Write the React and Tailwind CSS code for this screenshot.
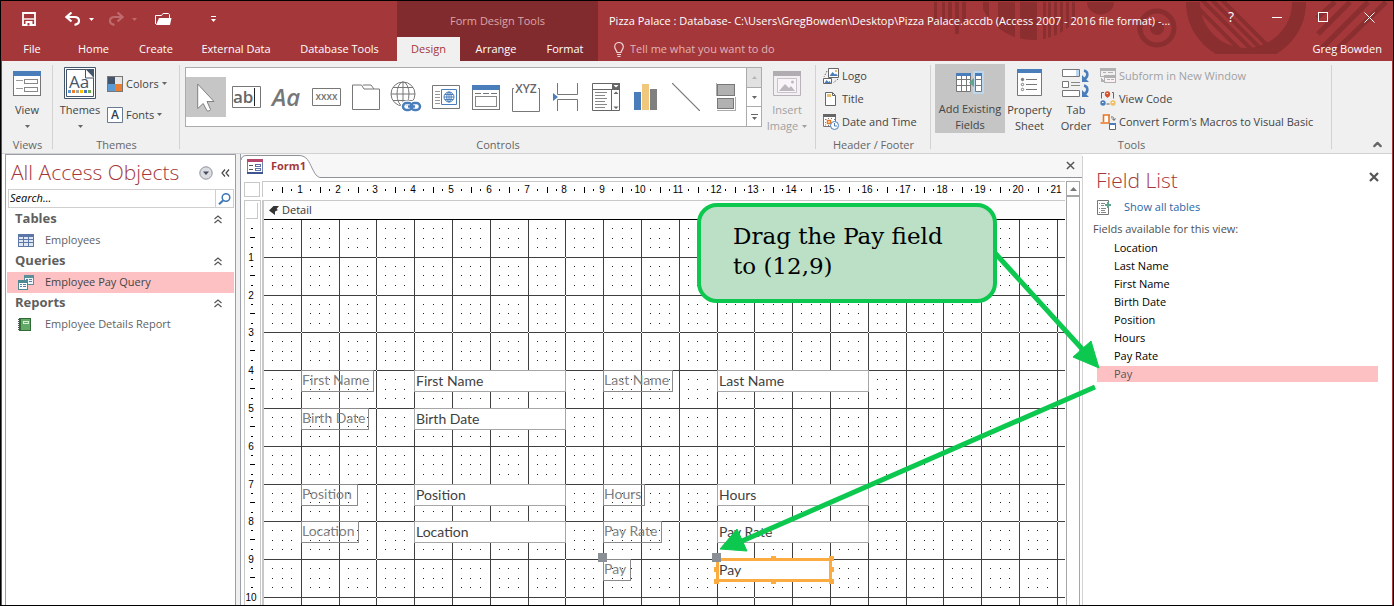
import React, { useState } from 'react';
import { ChevronUp } from 'lucide-react';

// one centimetre on the design surface
const CM = 37.79;
const START = 36.9;
const COLS = 21;
const ROWS = 10;

const linePos = (n) => Math.round(START + CM * n);

// grid lines that fall on a rounding edge show a white pixel where they cross
const hasGap = (n) => {
  const frac = (START + CM * n) % 1;
  return frac > 0.35 && frac < 0.5;
};

const tabs = [
  { name: 'File', width: 'w-[60px]' },
  { name: 'Home', width: 'w-[63px]' },
  { name: 'Create', width: 'w-[62px]' },
  { name: 'External Data', width: 'w-[98px]' },
  { name: 'Database Tools', width: 'w-[109px]' },
];

const contextTabs = [
  { name: 'Design', width: 'w-[63px]' },
  { name: 'Arrange', width: 'w-[72px]' },
  { name: 'Format', width: 'w-[66px]' },
];

const fieldNames = ['Location', 'Last Name', 'First Name', 'Birth Date', 'Position', 'Hours', 'Pay Rate', 'Pay'];

const formFields = [
  { id: 'first-name', name: 'First Name', label: 'left-[37px] top-[150px] w-[73px]', box: 'left-[150px] top-[150px] w-[152px]' },
  { id: 'birth-date', name: 'Birth Date', label: 'left-[37px] top-[188px] w-[68px]', box: 'left-[150px] top-[188px] w-[152px]' },
  { id: 'position', name: 'Position', label: 'left-[37px] top-[264px] w-[57px]', box: 'left-[150px] top-[264px] w-[152px]' },
  { id: 'location', name: 'Location', label: 'left-[37px] top-[301px] w-[58px]', box: 'left-[150px] top-[301px] w-[152px]' },
  { id: 'last-name', name: 'Last Name', label: 'left-[339px] top-[150px] w-[70px]', box: 'left-[453px] top-[150px] w-[152px]' },
  { id: 'hours', name: 'Hours', label: 'left-[339px] top-[264px] w-[42px]', box: 'left-[453px] top-[264px] w-[152px]' },
  { id: 'pay-rate', name: 'Pay Rate', label: 'left-[339px] top-[301px] w-[59px]', box: 'left-[453px] top-[301px] w-[152px]' },
  { id: 'pay', name: 'Pay', label: 'left-[339px] top-[339px] w-[28px]', box: 'left-[453px] top-[339px] w-[115px]' },
];

const Caret = ({ className }) => (
  <svg width="5" height="3" viewBox="0 0 5 3" className={className} aria-hidden="true">
    <path d="M0 0h5L2.5 3z" fill="currentColor" />
  </svg>
);

/* ---------- title bar icons ---------- */

const SaveIcon = () => (
  <svg width="14" height="14" viewBox="0 0 14 14" fill="none" stroke="#fff">
    <path d="M1 1h12v12H1z" strokeWidth="1.800" />
    <path d="M2 7h10" strokeWidth="1.400" />
    <path d="M3.500 9h7v5h-7z" fill="#fff" stroke="none" />
    <path d="M5.500 11h2v2.500h-2z" fill="#a4373a" stroke="none" />
  </svg>
);

const UndoIcon = ({ className }) => (
  <svg width="16" height="14" viewBox="0 0 16 14" fill="none" className={className}>
    <path d="M2 5h7.500c2.800 0 4.500 1.600 4.500 3.800S12.500 12.500 9.500 12.800" stroke="currentColor" strokeWidth="2.200" />
    <path d="M6.500 .5L1.500 5l5 4.500" stroke="currentColor" strokeWidth="2.200" />
  </svg>
);

const OpenIcon = () => (
  <svg width="17" height="14" viewBox="0 0 17 14" fill="none">
    <path d="M.5 12V3.500h6L8 1.500h5.500l1 1V6" stroke="#fff" />
    <path d="M4 6h12.500L15 13H1z" fill="#fff" />
  </svg>
);

const HeaderArt = () => (
  <svg className="absolute top-0 right-0" width="462" height="60" viewBox="930 1 462 60" fill="none" aria-hidden="true">
    <defs>
      <clipPath id="disc"><circle cx="1033" cy="-16" r="56" /></clipPath>
      <clipPath id="inner"><circle cx="1246" cy="2" r="47" /></clipPath>
      <clipPath id="flat"><path d="M1180 2h140v52h-140z" /></clipPath>
    </defs>
    <g fill="#8a2e30">
      <path d="M934 2h3v23h-3zM942 2h3v21h-3zM948 2h4v21h-4zM955 2h4v32h-4zM962 2h4v23h-4z" />
      <g clipPath="url(#disc)">
        <path d="M983 2h6v50h-6zM998 2h17v50h-17zM1020 2h17v50h-17zM1043 2h3v50h-3zM1048 2h3v50h-3zM1054 2h3v50h-3zM1060 2h3v50h-3zM1066 2h3v50h-3zM1072 2h3v50h-3z" />
      </g>
      <path d="M1087 2a13 12 0 0 0 27 0z" />
      <circle cx="1157" cy="28" r="7" />
    </g>
    <circle cx="1157" cy="28" r="17" stroke="#8a2e30" strokeWidth="5" />
    <g clipPath="url(#flat)">
      <circle cx="1246" cy="2" r="53" stroke="#8a2e30" strokeWidth="14" />
    </g>
    <g clipPath="url(#inner)" stroke="#8a2e30" strokeWidth="4">
      <path d="M1190 0l60 60M1202 0l60 60M1212 0l60 60M1222 0l60 60" />
    </g>
    <g stroke="#8a2e30" strokeWidth="5">
      <path d="M1335 2l-18 16M1350 2l-32 32M1368 2l-46 46M1386 2l-54 52" />
    </g>
  </svg>
);

/* ---------- ribbon icons ---------- */

const ViewIcon = () => (
  <svg width="28" height="25" viewBox="0 0 28 25" fill="none" shapeRendering="crispEdges">
    <path d="M.5 .5h27v24H.5z" fill="#fff" stroke="#777" />
    <path d="M0 0h28v5H0z" fill="#4a7ebb" />
    <path d="M3 9.500h7M3 17.500h7" stroke="#999" />
    <path d="M11.500 8.500h13v4h-13zM11.500 16.500h13v4h-13z" stroke="#888" />
  </svg>
);

const ThemesIcon = () => (
  <svg width="32" height="32" viewBox="0 0 32 32" className="overflow-visible">
    <path d="M.5 .5h31v31H.5z" fill="#fff" stroke="#44546a" />
    <path d="M2.500 2.500h19l8 8v19h-27z" fill="#fff" stroke="#44546a" />
    <path d="M21 2h9v9z" fill="#44546a" />
    <path d="M21.500 2v9H30" fill="#fff" stroke="#44546a" />
    <text x="5" y="21" fontSize="17" fontFamily="Open Sans, sans-serif" fill="#44546a">Aa</text>
    <g shapeRendering="crispEdges">
      <path d="M4 23h3v3H4z" fill="#5b9bd5" />
      <path d="M8 23h3v3H8z" fill="#ed7d31" />
      <path d="M12 23h3v3h-3z" fill="#a5a5a5" />
      <path d="M16 23h3v3h-3z" fill="#ffc000" />
      <path d="M20 23h3v3h-3z" fill="#4472c4" />
      <path d="M24 23h3v3h-3z" fill="#70ad47" />
    </g>
  </svg>
);

const ColorsIcon = () => (
  <svg width="16" height="16" viewBox="0 0 16 16" shapeRendering="crispEdges">
    <path d="M0 0h16v16H0z" fill="#777" />
    <path d="M1 1h7v7H1z" fill="#44546a" />
    <path d="M8 1h7v7H8z" fill="#e7e6e6" />
    <path d="M1 8h7v7H1z" fill="#5b9bd5" />
    <path d="M8 8h7v7H8z" fill="#ed7d31" />
  </svg>
);

const FontsIcon = () => (
  <svg width="16" height="16" viewBox="0 0 16 16" className="overflow-visible">
    <path d="M.5 .5h15v15H.5z" fill="#fff" stroke="#6a7a90" />
    <text x="8" y="12" textAnchor="middle" fontSize="12" fontWeight="600" fontFamily="Open Sans, sans-serif" fill="#333f50">A</text>
  </svg>
);

const PointerIcon = () => (
  <svg width="18" height="29" viewBox="0 0 18 29">
    <path d="M.7 1v24.500l5.500-5 3.800 7.300c1 .8 3.300-.2 3.500-1.500L10 18.500h7z" fill="#fff" stroke="#808080" />
  </svg>
);

const TextBoxIcon = () => (
  <svg width="29" height="22" viewBox="0 0 29 22" className="overflow-visible">
    <path d="M.5 .5h28v21H.5z" fill="#fff" stroke="#777" />
    <text x="1" y="17" fontSize="17" fontWeight="600" fontFamily="Open Sans, sans-serif" fill="#666">ab</text>
    <path d="M22.500 2v18" stroke="#222" />
  </svg>
);

const LabelIcon = () => (
  <svg width="30" height="24" viewBox="0 0 30 24" className="overflow-visible">
    <text x="1" y="21" fontSize="24" fontStyle="italic" fontWeight="600" fontFamily="Open Sans, sans-serif" fill="#777">Aa</text>
  </svg>
);

const ButtonIcon = () => (
  <svg width="29" height="18" viewBox="0 0 29 18" className="overflow-visible">
    <path d="M.5 .5h28v17H.5z" fill="#fff" stroke="#777" />
    <text x="14.500" y="12" textAnchor="middle" fontSize="10" fontWeight="600" fontFamily="Open Sans, sans-serif" fill="#777">xxxx</text>
  </svg>
);

const TabControlIcon = () => (
  <svg width="28" height="26" viewBox="0 0 28 26" fill="none" stroke="#777">
    <path d="M.5 25.500V1h9l2.500 4h15.500v20.500z" />
    <path d="M11 1h8l3 4" />
  </svg>
);

const LinkIcon = () => (
  <svg width="32" height="32" viewBox="0 0 32 32" fill="none">
    <g stroke="#777">
      <circle cx="13" cy="13" r="12" />
      <ellipse cx="13" cy="13" rx="6" ry="12" />
      <path d="M13 1v24M1 13h24M3 6.500h20M3 19.500h20" />
    </g>
    <g stroke="#fff" strokeWidth="5">
      <rect x="13" y="22" width="9" height="7" rx="3.500" />
      <rect x="20" y="22" width="9" height="7" rx="3.500" />
    </g>
    <g stroke="#4a7ebb" strokeWidth="2.500">
      <rect x="13" y="22" width="9" height="7" rx="3.500" />
      <rect x="21" y="22" width="9" height="7" rx="3.500" />
      <path d="M18 25.500h7" />
    </g>
  </svg>
);

const WebIcon = () => (
  <svg width="28" height="24" viewBox="0 0 28 24" fill="none">
    <path d="M.5 .5h27v23H.5z" stroke="#777" />
    <path d="M3 6.500h5M3 9.500h5M3 12.500h5M3 15.500h5M3 18.500h5" stroke="#999" />
    <path d="M9.500 4.500h15v15h-15z" stroke="#4a7ebb" />
    <g stroke="#4a7ebb">
      <circle cx="17" cy="12" r="5" />
      <ellipse cx="17" cy="12" rx="2.200" ry="5" />
      <path d="M12 12h10M13 9.500h8M13 14.500h8M17 7v10" />
    </g>
  </svg>
);

const NavigationIcon = () => (
  <svg width="28" height="25" viewBox="0 0 28 25" fill="none" shapeRendering="crispEdges">
    <path d="M.5 .5h27v24H.5z" stroke="#777" />
    <path d="M0 0h28v5H0z" fill="#4a7ebb" />
    <path d="M3 8.500h6M11 8.500h6M19 8.500h6" stroke="#777" />
    <path d="M3.500 11.500h21v10h-21z" stroke="#888" />
  </svg>
);

const OptionGroupIcon = () => (
  <svg width="28" height="29" viewBox="0 0 28 29" fill="none" className="overflow-visible">
    <path d="M2 5.500H.5v23h27v-23H26" stroke="#777" />
    <text x="14" y="10" textAnchor="middle" fontSize="12" fontWeight="600" fontFamily="Open Sans, sans-serif" fill="#666">XYZ</text>
  </svg>
);

const PageBreakIcon = () => (
  <svg width="26" height="28" viewBox="0 0 26 28" fill="none">
    <path d="M0 10l5 4-5 4z" fill="#4a7ebb" />
    <path d="M4.500 0v11.500h20V0M4.500 28V16.500h20V28" stroke="#777" />
  </svg>
);

const ComboIcon = () => (
  <svg width="28" height="28" viewBox="0 0 28 28" fill="none">
    <path d="M.5 .5h27v27H.5zM.5 6.500h27M19.500 6.500v21" stroke="#666" />
    <path d="M20 0h8v6h-8z" fill="#666" />
    <path d="M21.500 2h5L24 4.500z" fill="#fff" />
    <path d="M3 9.500h12M3 12.500h10M3 15.500h12M3 18.500h10M3 21.500h12M3 24.500h10" stroke="#888" />
    <path d="M21.500 11h5L24 8.500zM21.500 23.500h5L24 26z" fill="#666" />
  </svg>
);

const ChartIcon = () => (
  <svg width="24" height="26" viewBox="0 0 24 26" shapeRendering="crispEdges">
    <path d="M0 8h7v18H0z" fill="#4a7ebb" />
    <path d="M8 0h7v26H8z" fill="#efc87d" />
    <path d="M16 5h7v21h-7z" fill="#808080" />
  </svg>
);

const LineIcon = () => (
  <svg width="28" height="28" viewBox="0 0 28 28">
    <path d="M0 0l28 28" stroke="#777" strokeWidth="1.200" />
  </svg>
);

const ToggleIcon = () => (
  <svg width="20" height="28" viewBox="0 0 20 28" fill="none" shapeRendering="crispEdges">
    <path d="M1.500 1.500h17v11h-17zM1.500 15.500h16v10h-16z" fill="#b1b1b1" stroke="#777" />
    <path d="M.5 0v13M.5 27.500h19V14" stroke="#aaa" />
  </svg>
);

const InsertImageIcon = () => (
  <svg width="28" height="25" viewBox="0 0 28 25">
    <path d="M.5 .5h27v24H.5z" fill="#f3f0f3" stroke="#b8b3b8" />
    <path d="M0 0h28v5H0z" fill="#b1acb1" />
    <path d="M4.500 7.500h19v14h-19z" fill="#f8f4f8" stroke="#c8c3c8" />
    <path d="M6 20l6-7 4 4 2-2 4 5z" fill="#bdb8bd" />
    <circle cx="19.500" cy="11" r="1.500" fill="#bdb8bd" />
  </svg>
);

const LogoIcon = () => (
  <svg width="16" height="16" viewBox="0 0 16 16" fill="none">
    <path d="M5.500 .5h10v9h-10z" fill="#fff" stroke="#666" />
    <path d="M6.500 8l3-4 2.500 2.500L13 5.500l2 2.500z" fill="#4a7ebb" />
    <circle cx="13" cy="3" r="1" fill="#e8a33d" />
    <path d="M4 3L1 9M15 11l-5 4" stroke="#666" strokeDasharray="1.500 1.500" />
    <path d="M.5 10.500h8v5h-8z" fill="#fff" stroke="#666" />
    <path d="M1.500 15l2-3 2 2 1-1 1.500 2z" fill="#4a7ebb" />
  </svg>
);

const TitleIcon = () => (
  <svg width="16" height="16" viewBox="0 0 16 16" fill="none">
    <path d="M2.500 1.500h7l3 3v10h-10z" fill="#fff" stroke="#666" />
    <path d="M9.500 1.500v3h3" stroke="#666" />
    <path d="M4 3h4v3H4z" fill="#efc06a" />
  </svg>
);

const DateIcon = () => (
  <svg width="16" height="16" viewBox="0 0 16 16" fill="none">
    <path d="M.5 .5h12v12H.5z" fill="#fff" stroke="#777" />
    <path d="M0 0h13v3H0z" fill="#666" />
    <path d="M2 5.500h1.500M5 4.500h1M8 4.500h1M11 5.500h1M2 8.500h1M2 11h1M5 11.500h1" stroke="#777" />
    <path d="M4.500 6.500h3v3h-3z" stroke="#e87722" strokeWidth="1.500" />
    <circle cx="11.500" cy="11.500" r="4" fill="#fff" stroke="#4a7ebb" />
    <path d="M11.500 9v3h2.500" stroke="#4a7ebb" />
  </svg>
);

const AddFieldsIcon = () => (
  <svg width="28" height="24" viewBox="0 0 28 24">
    <path d="M17 0h11v23H17z" fill="#bdd7ee" />
    <path d="M.5 2.500h14v18H.5zM.5 8.500h14M.5 14.500h14M5.500 5v15M10.500 5v15" fill="#fff" stroke="#777" />
    <path d="M0 2h15v3H0z" fill="#4a7ebb" />
    <path d="M19.500 2.500h6v18h-6zM19.500 8.500h6M19.500 14.500h6" fill="#fff" stroke="#777" />
    <path d="M19 2h7v3h-7z" fill="#4a7ebb" />
    <path d="M18 7v9l-5-4.500z" fill="#5fa58a" />
  </svg>
);

const PropertySheetIcon = () => (
  <svg width="25" height="28" viewBox="0 0 25 28" fill="none">
    <path d="M.5 .5h24v26H.5z" fill="#fff" stroke="#777" />
    <path d="M0 0h25v4H0z" fill="#4a7ebb" />
    <circle cx="5.500" cy="10.500" r="1.200" fill="#777" stroke="#777" />
    <circle cx="5.500" cy="15.500" r="1.200" stroke="#777" />
    <circle cx="5.500" cy="20.500" r="1.200" stroke="#777" />
    <path d="M9 10.500h11M9 15.500h11M9 20.500h11" stroke="#777" />
  </svg>
);

const TabOrderIcon = () => (
  <svg width="28" height="28" viewBox="0 0 28 28" fill="none">
    <path d="M.5 .5h17v7H.5zM.5 12.500h6v6h-6zM.5 21.500h17v6H.5z" fill="#fff" stroke="#777" />
    <path d="M14 1h3v6h-3z" fill="#bdd7ee" />
    <path d="M9 13.500h9M9 16.500h9" stroke="#888" />
    <path d="M22 1.500c4 1 5 6 0 9M22 16.500c4 1 5 6 0 9" stroke="#4a7ebb" strokeWidth="2.500" />
    <path d="M20 6v7h7zM20 21v7h7z" fill="#4a7ebb" />
  </svg>
);

const SubformIcon = () => (
  <svg width="16" height="16" viewBox="0 0 16 16" fill="none" shapeRendering="crispEdges">
    <path d="M.5 .5h15v8H.5z" fill="#f0f0f0" stroke="#b1b1b1" />
    <path d="M0 0h16v3H0z" fill="#b1b1b1" />
    <path d="M4.500 7.500h11v7h-11z" fill="#f8f0f5" stroke="#b1b1b1" />
    <path d="M4 7h12v2H4zM7 11.500h3M11 11.500h3M1.500 10v3H4M3 4.500h3M8 4.500h5" stroke="#b1b1b1" fill="#b1b1b1" />
  </svg>
);

const ViewCodeIcon = () => (
  <svg width="16" height="16" viewBox="0 0 16 16" fill="none">
    <path d="M4 1.500H1.500v6M12 1.500h1.500v6M6.500 13h3" stroke="#666" />
    <circle cx="7.500" cy="3" r="2.700" fill="#d9532c" />
    <path d="M5 4.500l2.500 2.500L10 4.500z" fill="#d9532c" />
    <circle cx="3" cy="12" r="2.700" fill="#4a7ebb" />
    <circle cx="13" cy="12" r="2.700" fill="#efc06a" />
    <path d="M6.500 2.500h1.500M2 11.500h1.500M12 11.500h1.500" stroke="#fff" />
  </svg>
);

const ConvertIcon = () => (
  <svg width="16" height="16" viewBox="0 0 16 16" fill="none">
    <path d="M3.500 1h6v7.500h-6z" fill="#fff" />
    <path d="M3.500 8V1h6.500M9 1v8H.5" stroke="#e87722" strokeWidth="1.600" />
    <path d="M11 3c2.500-.5 3 1 3 3M12 4.500l2 2 1.500-2" stroke="#666" />
    <path d="M9.500 9.500h6v6h-6z" fill="#fff" stroke="#666" />
    <path d="M9 9h7v2H9z" fill="#4a7ebb" />
  </svg>
);

const gallery = [
  ['Select', PointerIcon],
  ['Text Box', TextBoxIcon],
  ['Label', LabelIcon],
  ['Button', ButtonIcon],
  ['Tab Control', TabControlIcon],
  ['Hyperlink', LinkIcon],
  ['Web Browser Control', WebIcon],
  ['Navigation Control', NavigationIcon],
  ['Option Group', OptionGroupIcon],
  ['Insert Page Break', PageBreakIcon],
  ['Combo Box', ComboIcon],
  ['Chart', ChartIcon],
  ['Line', LineIcon],
  ['Toggle Button', ToggleIcon],
];

/* ---------- navigation pane icons ---------- */

const TableIcon = () => (
  <svg width="16" height="13" viewBox="0 0 16 13" shapeRendering="crispEdges">
    <path d="M0 0h16v13H0z" fill="#5d76a8" />
    <path d="M1 3h4v2H1zM6 3h4v2H6zM11 3h4v2h-4zM1 6h4v2H1zM6 6h4v2H6zM11 6h4v2h-4zM1 9h4v3H1zM6 9h4v3H6zM11 9h4v3h-4z" fill="#dfe7f5" />
  </svg>
);

const QueryIcon = () => (
  <svg width="16" height="15" viewBox="0 0 16 15" shapeRendering="crispEdges">
    <path d="M6 0h10v10H6z" fill="#5b8f99" />
    <path d="M7 3h8v6H7z" fill="#eef6f8" />
    <path d="M8 4h2v1H8zM11 4h3v1h-3zM11 6h3v1h-3z" fill="#5b7ea8" />
    <path d="M0 5h10v10H0z" fill="#4f8792" />
    <path d="M1 8h8v6H1z" fill="#fff" />
    <path d="M2 9h2v1H2zM5 9h3v1H5zM2 11h2v1H2zM5 11h3v1H5z" fill="#5b7ea8" />
  </svg>
);

const ReportIcon = () => (
  <svg width="13" height="13" viewBox="0 0 13 13" shapeRendering="crispEdges">
    <path d="M1 0h12v13H1z" fill="#2f6b35" />
    <path d="M3 1h9v11H3z" fill="#63a866" />
    <path d="M5 3h6v3H5z" fill="#d8efd5" />
    <path d="M6 4h4v1H6z" fill="#63a866" />
    <path d="M0 1h2v1H0zM0 3h2v1H0zM0 5h2v1H0zM0 7h2v1H0zM0 9h2v1H0zM0 11h2v1H0z" fill="#555" />
  </svg>
);

const FormTabIcon = () => (
  <svg width="16" height="15" viewBox="0 0 16 15" fill="none" shapeRendering="crispEdges">
    <path d="M.5 .5h15v13H.5z" fill="#fff" stroke="#6f7fa8" />
    <path d="M0 0h16v3H0z" fill="#b5476b" />
    <path d="M0 13h16v2H0z" fill="#3f5590" />
    <path d="M2 6.500h4M2 10.500h4" stroke="#555" />
    <path d="M8.500 5.500h5v2h-5zM8.500 9.500h5v2h-5z" stroke="#5c72a8" />
  </svg>
);

const DoubleUp = () => (
  <svg width="8" height="9" viewBox="0 0 8 9" fill="none" stroke="#555" strokeWidth="1.200">
    <path d="M.5 4L4 1l3.500 3M.5 8L4 5l3.500 3" />
  </svg>
);

const CloseX = ({ size, width }) => (
  <svg width={size} height={size} viewBox="0 0 10 10" stroke="#555" strokeWidth={width}>
    <path d="M1 1l8 8M9 1L1 9" />
  </svg>
);

const navGroups = [
  { title: 'Tables', item: 'Employees', Icon: TableIcon },
  { title: 'Queries', item: 'Employee Pay Query', Icon: QueryIcon },
  { title: 'Reports', item: 'Employee Details Report', Icon: ReportIcon },
];

const TitleBar = () => (
  <header className="flex h-[60px] shrink-0 bg-[#a4373a] text-white">
    <div className="flex w-[395px] shrink-0 flex-col">
      <div className="flex h-9 items-center pl-5">
        <button aria-label="Save" className="mr-[29px]"><SaveIcon /></button>
        <button aria-label="Undo"><UndoIcon /></button>
        <button aria-label="Undo history" className="ml-2"><Caret /></button>
        <button aria-label="Redo" className="ml-[14px] text-[#bf6b6e]" disabled><UndoIcon className="-scale-x-100" /></button>
        <button aria-label="Redo history" className="ml-2 text-[#bf6b6e]" disabled><Caret /></button>
        <button aria-label="Open" className="ml-[18px]"><OpenIcon /></button>
        <button aria-label="Customize Quick Access Toolbar" className="ml-[39px] flex flex-col items-center gap-[2px]">
          <span className="h-px w-[5px] bg-white" />
          <Caret />
        </button>
      </div>
      <nav className="flex h-6">
        {tabs.map((tab) => (
          <button key={tab.name} className={`${tab.width} whitespace-nowrap pt-px text-center`}>{tab.name}</button>
        ))}
      </nav>
    </div>

    <div className="flex w-[201px] shrink-0 flex-col bg-[#822b2e]">
      <div className="flex h-9 items-center justify-center pt-1 text-[#dba5a7]">Form Design Tools</div>
      <nav className="flex h-6">
        {contextTabs.map((tab) => (
          <button
            key={tab.name}
            className={`${tab.width} pt-px ${tab.name === 'Design' ? 'bg-[#f0f0f0] text-[#a4373a]' : ''}`}
          >
            {tab.name}
          </button>
        ))}
      </nav>
    </div>

    <div className="relative flex min-w-0 flex-1 flex-col overflow-hidden">
      <HeaderArt />
      <div className="relative flex h-9 pl-[11px]">
        <div className="min-w-0 flex-1 overflow-hidden whitespace-nowrap pt-1 leading-8">
          Pizza Palace : Database- C:\Users\GregBowden\Desktop\Pizza Palace.accdb (Access 2007 - 2016 file format) -...
        </div>
        <div className="flex h-8">
          <button aria-label="Help" className="w-[46px] text-sm">?</button>
          <button aria-label="Minimize" className="flex w-[46px] items-center justify-center"><span className="h-px w-[10px] bg-white" /></button>
          <button aria-label="Maximize" className="flex w-[46px] items-center justify-center"><span className="h-[10px] w-[10px] border border-white" /></button>
          <button aria-label="Close" className="flex w-[46px] items-center justify-center">
            <svg width="11" height="11" viewBox="0 0 11 11" stroke="#fff"><path d="M.5 .5l10 10M10.500 .5l-10 10" /></svg>
          </button>
        </div>
      </div>
      <div className="relative flex h-6 items-center pl-4 pr-[10px]">
        <svg width="10" height="15" viewBox="0 0 10 15" fill="none" stroke="#f0d5d6" aria-hidden="true">
          <path d="M3 10.500C3 8.500 .7 7.500 .7 4.800a4.300 4.300 0 0 1 8.600 0c0 2.700-2.300 3.700-2.300 5.700zM3 12.500h4M3.500 14.500h3" strokeWidth="1.200" />
        </svg>
        <input
          type="text"
          aria-label="Tell me what you want to do"
          placeholder="Tell me what you want to do"
          className="ml-[6px] min-w-0 flex-1 bg-transparent pt-px outline-none placeholder:text-[#e0b4b6]"
        />
        <button className="pt-px">Greg Bowden</button>
      </div>
    </div>
  </header>
);

const Group = ({ title, className, children }) => (
  <section className={`relative flex flex-col justify-between ${className}`}>
    <div className="flex">{children}</div>
    <h2 className="text-center leading-4 text-[#666]">{title}</h2>
    <span className="absolute top-1 right-0 bottom-1 w-px bg-[#d2d2d2]" />
  </section>
);

const BigButton = ({ className, icon, lines, caret }) => (
  <button className={`flex shrink-0 flex-col items-center ${className}`}>
    <span className="flex h-[38px] items-center justify-center">{icon}</span>
    {lines.map((line, i) => (
      <span key={line} className="flex items-center gap-1 whitespace-nowrap leading-4">
        {line}
        {caret === 'inline' && i === lines.length - 1 && <Caret />}
      </span>
    ))}
    {caret === 'below' && <span className="flex h-4 items-center text-[#666]"><Caret /></span>}
  </button>
);

const SmallButton = ({ icon, children, disabled, caret }) => (
  <button disabled={disabled} className="flex h-[23px] items-center gap-[3px] whitespace-nowrap disabled:text-[#a0a0a0]">
    {icon}
    <span className="pt-px">{children}</span>
    {caret && <Caret className="text-[#666]" />}
  </button>
);

const Ribbon = () => (
  <div className="relative flex h-[93px] shrink-0 border-b border-[#d2d2d2] bg-[#f0f0f0] text-[#444]">
    <Group title="Views" className="w-[51px] shrink-0">
      <BigButton className="mt-[3px] w-[50px]" icon={<ViewIcon />} lines={['View']} caret="below" />
    </Group>

    <Group title="Themes" className="w-[127px] shrink-0">
      <BigButton className="mt-[3px] w-[54px]" icon={<ThemesIcon />} lines={['Themes']} caret="below" />
      <div className="mt-[11px] flex flex-col gap-2">
        <SmallButton icon={<ColorsIcon />} caret>Colors</SmallButton>
        <SmallButton icon={<FontsIcon />} caret>Fonts</SmallButton>
      </div>
    </Group>

    <Group title="Controls" className="w-[636px] shrink-0">
      <div className="mt-[6px] ml-[5px] flex h-[60px] border border-[#ababab] bg-white">
        <div className="flex items-center">
          {gallery.map(([name, Icon], i) => (
            <button
              key={name}
              aria-label={name}
              className={`flex h-10 w-10 items-center justify-center ${i === 0 ? 'bg-[#c6c6c6]' : ''}`}
            >
              <Icon />
            </button>
          ))}
        </div>
        <div className="flex w-[15px] flex-col divide-y divide-[#ababab] border-l border-[#ababab] text-[#666]">
          <button aria-label="Scroll up" disabled className="flex flex-1 items-center justify-center bg-[#e1e1e1] text-[#b5b5b5]"><Caret className="-scale-y-100" /></button>
          <button aria-label="Scroll down" className="flex flex-1 items-center justify-center"><Caret /></button>
          <button aria-label="More controls" className="flex flex-1 flex-col items-center justify-center gap-[2px]">
            <span className="h-px w-[7px] bg-[#666]" />
            <Caret />
          </button>
        </div>
      </div>
      <BigButton className="mt-[3px] w-[50px] text-[#a0a0a0]" icon={<InsertImageIcon />} lines={['Insert', 'Image']} caret="inline" />
    </Group>

    <Group title="Header / Footer" className="w-[115px] shrink-0">
      <div className="mt-[3px] ml-[7px] flex flex-col">
        <SmallButton icon={<LogoIcon />}>Logo</SmallButton>
        <SmallButton icon={<TitleIcon />}>Title</SmallButton>
        <SmallButton icon={<DateIcon />}>Date and Time</SmallButton>
      </div>
    </Group>

    <Group title="Tools" className="w-[401px] shrink-0">
      <BigButton className="mt-[3px] ml-1 h-[69px] w-[70px] bg-[#c5c5c5]" icon={<AddFieldsIcon />} lines={['Add Existing', 'Fields']} />
      <BigButton className="mt-[3px] w-[49px]" icon={<PropertySheetIcon />} lines={['Property', 'Sheet']} />
      <BigButton className="mt-[3px] w-[44px]" icon={<TabOrderIcon />} lines={['Tab', 'Order']} />
      <div className="mt-[3px] ml-[2px] flex flex-col">
        <SmallButton icon={<SubformIcon />} disabled>Subform in New Window</SmallButton>
        <SmallButton icon={<ViewCodeIcon />}>View Code</SmallButton>
        <SmallButton icon={<ConvertIcon />}>Convert Form's Macros to Visual Basic</SmallButton>
      </div>
    </Group>

    <button aria-label="Collapse the Ribbon" className="mt-auto mr-2 mb-[2px] ml-auto text-[#666]"><ChevronUp size={13} strokeWidth={4} /></button>
  </div>
);

const NavigationPane = () => (
  <aside className="ml-[3px] w-[231px] shrink-0 border-x border-t border-[#9a9ea8] bg-white text-[#5f5f5f]">
    <div className="flex h-[34px] items-center px-[5px] pt-px">
      <h1 className="flex-1 whitespace-nowrap text-[21px] text-[#a4373a] font-light">All Access Objects</h1>
      <button aria-label="Filter objects">
        <svg width="14" height="14" viewBox="0 0 14 14"><circle cx="7" cy="7" r="6.200" fill="#dcdde2" stroke="#8d909a" /><path d="M4 5.500h6L7 9z" fill="#444b5c" /></svg>
      </button>
      <button aria-label="Close navigation pane" className="ml-2">
        <svg width="9" height="8" viewBox="0 0 9 8" fill="none" stroke="#444" strokeWidth="1.200"><path d="M4 .5L1 4l3 3.500M8 .5L5 4l3 3.500" /></svg>
      </button>
    </div>
    <div className="mr-px mb-px ml-[2px] flex h-[19px] border border-[#cfcfcf]">
      <input
        type="text"
        aria-label="Search"
        placeholder="Search..."
        className="min-w-0 flex-1 px-px italic outline-none placeholder:text-black"
      />
      <button aria-label="Search objects" className="flex w-[18px] items-center justify-center border-l border-[#cfcfcf]">
        <svg width="13" height="12" viewBox="0 0 13 12" fill="none" stroke="#3f76b5"><circle cx="8" cy="4.500" r="3.800" strokeWidth="1.500" /><path d="M5 7.500L1 11.300" strokeWidth="2" /></svg>
      </button>
    </div>
    {navGroups.map(({ title, item, Icon }) => (
      <div key={title}>
        <button className="flex h-[21px] w-full items-center justify-between pr-[13px] pb-px pl-[9px] text-[13px] font-bold">
          {title}
          <DoubleUp />
        </button>
        <button
          className={`mx-px flex h-[21px] w-[227px] items-center whitespace-nowrap pl-[11px] ${
            item === 'Employee Pay Query' ? 'bg-[#fdc1c4] text-[#444]' : ''
          }`}
        >
          <span className="w-[27px]"><Icon /></span>
          {item}
        </button>
      </div>
    ))}
  </aside>
);

const HorizontalRuler = () => (
  <svg className="block font-['Liberation_Sans',sans-serif]" width={COLS * 38 + 8} height="16" aria-hidden="true">
    {Array.from({ length: COLS }, (_, n) => {
      const x = Math.round(CM * n);
      return (
        <g key={n}>
          <path d={`M${x + 9} 7h1v2h-1zM${x + 19} 5h1v6h-1zM${x + 28} 7h1v2h-1z`} />
          <text x={linePos(n)} y="11" textAnchor="middle" fontSize="10">{n + 1}</text>
        </g>
      );
    })}
  </svg>
);

const VerticalRuler = () => (
  <svg className="block font-['Liberation_Sans',sans-serif]" width="15" height={ROWS * 38 + 8} aria-hidden="true">
    {Array.from({ length: ROWS }, (_, n) => {
      const y = Math.round(CM * n);
      return (
        <g key={n}>
          <path d={`M6 ${y + 9}h2v1h-2zM5 ${y + 18}h5v1h-5zM6 ${y + 28}h2v1h-2z`} />
          <text x="6" y={linePos(n) + 5} textAnchor="middle" fontSize="10">{n + 1}</text>
        </g>
      );
    })}
  </svg>
);

const Grid = () => {
  // the surface runs on past the last number of the rulers
  const cols = Array.from({ length: COLS * 2 }, (_, n) => n);
  const rows = Array.from({ length: ROWS * 3 }, (_, n) => n);
  const steps = (count) => Array.from({ length: count * 4 }, (_, n) => n + 1).filter((n) => n % 4 !== 0);
  const at = (n) => Math.floor(START + CM * (n / 4 - 1));

  // dots are one long path, one pixel each
  const dots = steps(rows.length).map((r) => steps(cols.length).map((c) => `M${at(c)} ${at(r)}h1v1h-1z`).join('')).join('');

  return (
    <svg className="absolute top-0 left-0" width={cols.length * 38} height={rows.length * 38} shapeRendering="crispEdges" aria-hidden="true">
      <path d={dots} fill="#222" />
      <g fill="#3f3f3f">
        {cols.map((n) => <rect key={n} x={linePos(n)} y="0" width="1" height="100%" />)}
        {rows.map((n) => <rect key={n} x="0" y={linePos(n)} width="100%" height="1" />)}
      </g>
      <g fill="#fff">
        {rows.map((r) => cols.filter((c) => hasGap(c) || hasGap(r)).map((c) => (
          <rect key={`${r}-${c}`} x={linePos(c)} y={linePos(r)} width="1" height="1" />
        )))}
      </g>
    </svg>
  );
};

const handles = [
  '-left-[5px] top-[6px]',
  '-left-[5px] -bottom-[5px]',
  'left-[52px] -top-[5px]',
  'left-[52px] -bottom-[5px]',
  '-right-[5px] -top-[5px]',
  '-right-[5px] top-[6px]',
  '-right-[5px] -bottom-[5px]',
];

const DesignSurface = () => {
  const [values, setValues] = useState(() => Object.fromEntries(formFields.map((f) => [f.id, f.name])));

  return (
    <div className="relative min-h-0 flex-1 overflow-hidden bg-white font-['Lato',sans-serif] text-[14px]">
      <Grid />
      {formFields.map((field) => (
        <React.Fragment key={field.id}>
          <label htmlFor={field.id} className={`absolute h-[22px] whitespace-nowrap border border-[#8a8a8a] leading-[18px] text-[#7f7f7f] ${field.label}`}>
            {field.name}
          </label>
          <input
            id={field.id}
            type="text"
            value={values[field.id]}
            onChange={(e) => setValues({ ...values, [field.id]: e.target.value })}
            className={`absolute h-[22px] border border-[#a6a6a6] bg-white px-px pb-[2px] text-[#3f3f3f] outline-none ${field.box}`}
          />
        </React.Fragment>
      ))}

      {/* selection frame of the Pay text box */}
      <div className="absolute top-[338px] left-[452px] h-[24px] w-[116px] border-[3px] border-[#fbab3f]">
        {handles.map((place) => (
          <span key={place} className={`absolute h-[5px] w-[5px] bg-[#fbab3f] ${place}`} />
        ))}
      </div>
      <span className="absolute top-[333px] left-[448px] h-[9px] w-[9px] bg-[#8b8f96]" />
      <span className="absolute top-[333px] left-[334px] h-[9px] w-[9px] bg-[#8b8f96]" />
    </div>
  );
};

const FormPanel = () => (
  <main className="flex min-w-0 flex-1 flex-col border-l border-[#9a9ea8] bg-white">
    <div className="flex h-6 shrink-0 items-start justify-between border-b border-[#8f9297] bg-[#f7f7f7]">
      <div className="relative flex h-6 w-[80px] items-center">
        <svg className="absolute top-0 left-0" width="80" height="24" viewBox="0 0 80 24" aria-hidden="true">
          <path d="M0 24V5Q1 1.500 5 1.500H58C66 1.500 68 8 71 14S76 23.500 80 23.500V24z" fill="#fff" />
          <path d="M0 6Q1 1.500 5 1.500H58C66 1.500 68 8 71 14S76 23.500 80 23.500" fill="none" stroke="#8f9297" />
        </svg>
        <button className="relative ml-[6px] flex items-center gap-2 font-bold text-[#a4373a]">
          <FormTabIcon />
          Form1
        </button>
      </div>
      <button aria-label="Close Form1" className="mt-[7px] mr-[7px]"><CloseX size={9} width={1.6} /></button>
    </div>

    <div className="flex min-h-0 flex-1 pt-[3px]">
      <div className="flex w-[21px] shrink-0 flex-col pl-[3px]">
        <div className="mt-px h-[15px] w-[16px] border border-[#c8c8c8]" />
        <div className="mt-[3px] min-h-0 w-[17px] flex-1 overflow-hidden border-x border-t border-[#c8c8c8]">
          <div className="mt-[2px] ml-px h-4 w-3 border-r border-b border-[#c8c8c8]" />
          <VerticalRuler />
        </div>
      </div>
      <div className="flex min-w-0 flex-1 flex-col">
        <div className="h-4 shrink-0 overflow-hidden border-t border-l border-[#c8c8c8]">
          <HorizontalRuler />
        </div>
        <div className="mt-[3px] flex min-h-0 flex-1 flex-col border-t border-l-2 border-[#c8c8c8]">
          <div className="flex h-[19px] shrink-0 items-center gap-[3px] border-b border-black bg-[#fcfcfc] pt-px pl-[5px] text-[#333]">
            <svg width="10" height="9" viewBox="0 0 10 9" aria-hidden="true"><path d="M0 4.500L4.500 0H10L7.500 3 9 4 6 5.500V9z" fill="#333" /></svg>
            Detail
          </div>
          <DesignSurface />
        </div>
      </div>
      <div className="flex w-[17px] shrink-0 flex-col pr-[2px] pl-px">
        <button aria-label="Scroll up" className="flex h-[15px] shrink-0 items-center justify-center border border-[#a6a6a6]">
          <svg width="7" height="4" viewBox="0 0 7 4"><path d="M0 4h7L3.500 0z" fill="#777" /></svg>
        </button>
        <div className="flex-1 border-x border-t border-[#a6a6a6]" />
      </div>
    </div>
  </main>
);

const FieldList = () => (
  <aside className="mt-[2px] w-[310px] shrink-0 border-l border-[#d2d2d2] bg-white">
    <div className="flex items-start justify-between pt-2 pr-[13px] pl-[13px]">
      <h1 className="text-[21px] leading-8 text-[#a4373a] font-light">Field List</h1>
      <button aria-label="Close Field List" className="mt-2"><CloseX size={10} width={2.2} /></button>
    </div>
    <a href="#all" className="mt-px ml-[14px] flex h-5 items-center gap-[13px] text-[#2b66a6]">
      <svg width="14" height="15" viewBox="0 0 14 15" fill="none" aria-hidden="true">
        <path d="M.5 .5h11v14H.5z" stroke="#777" />
        <path d="M2 3.500h1M4 3.500h4M4 5.500h3M2 8.500h1M4 8.500h5M4 10.500h4M2 12.500h1M4 12.500h5" stroke="#888" />
        <path d="M8 2h6v6H8z" fill="#fff" />
        <path d="M11 2v6M8 5h6" stroke="#5fa58a" strokeWidth="2" />
      </svg>
      Show all tables
    </a>
    <h2 className="mt-[2px] ml-[10px] leading-5 text-[#505050]">Fields available for this view:</h2>
    <ul className="mx-[14px] text-black">
      {fieldNames.map((name) => (
        <li key={name} className="flex h-[18px] items-center">
          <span className={`flex h-4 w-full items-center pl-[17px] ${name === 'Pay' ? 'bg-[#fdc1c4] text-[#555]' : ''}`}>{name}</span>
        </li>
      ))}
    </ul>
  </aside>
);

const Callout = () => (
  <div className="pointer-events-none absolute inset-0">
    <svg className="absolute inset-0 h-full w-full" aria-hidden="true">
      <g transform="translate(-2 -154)" fill="#0dc84f" stroke="#0dc84f">
        <path d="M995 253L1084 351M1095 387L742 541" strokeWidth="5" fill="none" />
        <path d="M1099 368L1091 341 1073 357zM720 549L737 529 747 551z" strokeWidth="1" />
      </g>
    </svg>
    <p className="absolute top-[49px] left-[695px] h-[100px] w-[300px] rounded-[20px] border-4 border-[#0dc84f] bg-[#bbe0c6] py-[14px] pl-8 font-['DejaVu_Serif',serif] text-[23px] leading-[30px] text-black">
      Drag the Pay field<br />to (12,9)
    </p>
  </div>
);

const App = () => (
  <div className="flex h-screen flex-col overflow-hidden border border-black bg-white font-['Open_Sans',sans-serif] text-[11px]">
    <div className="flex min-h-0 flex-1 flex-col border-x border-[#a4373a]">
      <TitleBar />
      <Ribbon />
      <div className="relative flex min-h-0 flex-1">
        <NavigationPane />
        <div className="w-1 shrink-0 bg-[#f0f0f0]" />
        <FormPanel />
        <FieldList />
        <Callout />
      </div>
    </div>
  </div>
);

export default App;
